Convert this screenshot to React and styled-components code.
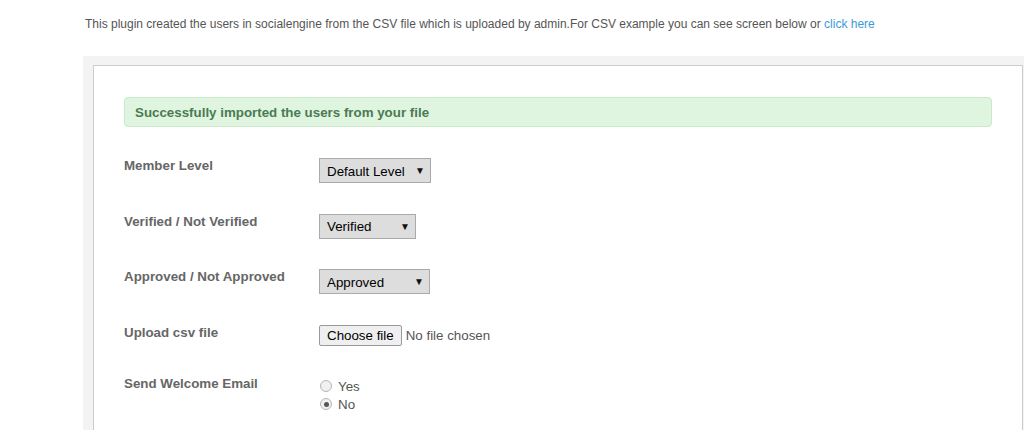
import React from 'react';
import styled, { createGlobalStyle } from 'styled-components';

const Global = createGlobalStyle`
  body {
    margin: 0;
    background: #fff;
    font-family: "Liberation Sans", Arial, sans-serif;
  }
`;

const Intro = styled.p`
  margin: 0;
  padding: 15px 0 0 85px;
  height: 41px;
  font-size: 12px;
  line-height: 18px;
  color: #555;
  a {
    color: #3b9bd8;
    text-decoration: none;
  }
`;

const Outer = styled.div`
  margin-left: 83px;
  padding: 9px 1px 0 10px;
  background: #f3f3f3;
`;

const Panel = styled.div`
  background: #fff;
  border: 1px solid #ccc;
  border-bottom: none;
  padding: 31px 30px 10px 30px;
  height: 330px;
`;

const Success = styled.div`
  height: 28px;
  border: 1px solid #c9e8cc;
  border-radius: 4px;
  background: #dff5e0;
  color: #4b7a52;
  font-size: 13.33px;
  font-weight: bold;
  line-height: 29px;
  padding: 0 10px;
  margin-bottom: 31px;
`;

const Form = styled.div`
  display: flex;
  flex-direction: column;
  gap: 30.5px;
`;

const Row = styled.div`
  display: grid;
  grid-template-columns: 195px 1fr;
  align-items: start;
`;

const Label = styled.div`
  font-size: 13.33px;
  font-weight: bold;
  line-height: 15px;
  color: #666;
`;

const SelectWrap = styled.div`
  position: relative;
  width: ${p => p.w}px;
  height: 25px;
`;

const Select = styled.select`
  appearance: none;
  width: 100%;
  height: 25px;
  box-sizing: border-box;
  border: 1px solid #aaa;
  border-radius: 0;
  background: #ddd;
  font-family: "Liberation Sans", Arial, sans-serif;
  font-size: 13.33px;
  color: #000;
  padding: 1px 18px 0 7px;
  outline: none;
`;

const Arrow = styled.span`
  position: absolute;
  right: 6px;
  top: 8px;
  font-size: 10px;
  line-height: 10px;
  color: #111;
  pointer-events: none;
`;

const FileField = styled.label`
  display: flex;
  align-items: center;
  gap: 4px;
  font-size: 13.33px;
  color: #555;
  input {
    display: none;
  }
`;

const FileButton = styled.span`
  display: inline-flex;
  align-items: center;
  box-sizing: border-box;
  height: 21px;
  padding: 0 7px;
  background: #efefef;
  border: 1px solid #9a9a9a;
  border-radius: 2px;
  color: #000;
  font-size: 13.33px;
`;

const Radios = styled.div`
  display: flex;
  flex-direction: column;
  padding-top: 1px;
`;

const RadioLine = styled.label`
  display: flex;
  align-items: center;
  height: 18px;
  font-size: 13.33px;
  color: #555;
`;

const Radio = styled.input`
  appearance: none;
  box-sizing: border-box;
  width: 12px;
  height: 12px;
  margin: 0 6px 0 1px;
  border: 1px solid #b5b5b5;
  border-radius: 50%;
  background: #f0f0f0;
  position: relative;
  &:checked::after {
    content: '';
    position: absolute;
    left: 2.5px;
    top: 2.5px;
    width: 5px;
    height: 5px;
    border-radius: 50%;
    background: #555;
  }
`;

function Dropdown({ w, value }) {
  return (
    <SelectWrap w={w}>
      <Select defaultValue={value}>
        <option>{value}</option>
      </Select>
      <Arrow>▼</Arrow>
    </SelectWrap>
  );
}

export default function App() {
  return (
    <>
      <Global />
      <Intro>
        This plugin created the users in socialengine from the CSV file which is uploaded by admin.For CSV example you can see screen below or <a href="#">click here</a>
      </Intro>
      <Outer>
        <Panel>
          <Success>Successfully imported the users from your file</Success>
          <Form>
            <Row>
              <Label>Member Level</Label>
              <Dropdown w={112} value="Default Level" />
            </Row>
            <Row>
              <Label>Verified / Not Verified</Label>
              <Dropdown w={97} value="Verified" />
            </Row>
            <Row>
              <Label>Approved / Not Approved</Label>
              <Dropdown w={111} value="Approved" />
            </Row>
            <Row>
              <Label>Upload csv file</Label>
              <FileField>
                <input type="file" />
                <FileButton>Choose file</FileButton>
                No file chosen
              </FileField>
            </Row>
            <Row>
              <Label>Send Welcome Email</Label>
              <Radios>
                <RadioLine><Radio type="radio" name="welcome" />Yes</RadioLine>
                <RadioLine><Radio type="radio" name="welcome" defaultChecked />No</RadioLine>
              </Radios>
            </Row>
          </Form>
        </Panel>
      </Outer>
    </>
  );
}
